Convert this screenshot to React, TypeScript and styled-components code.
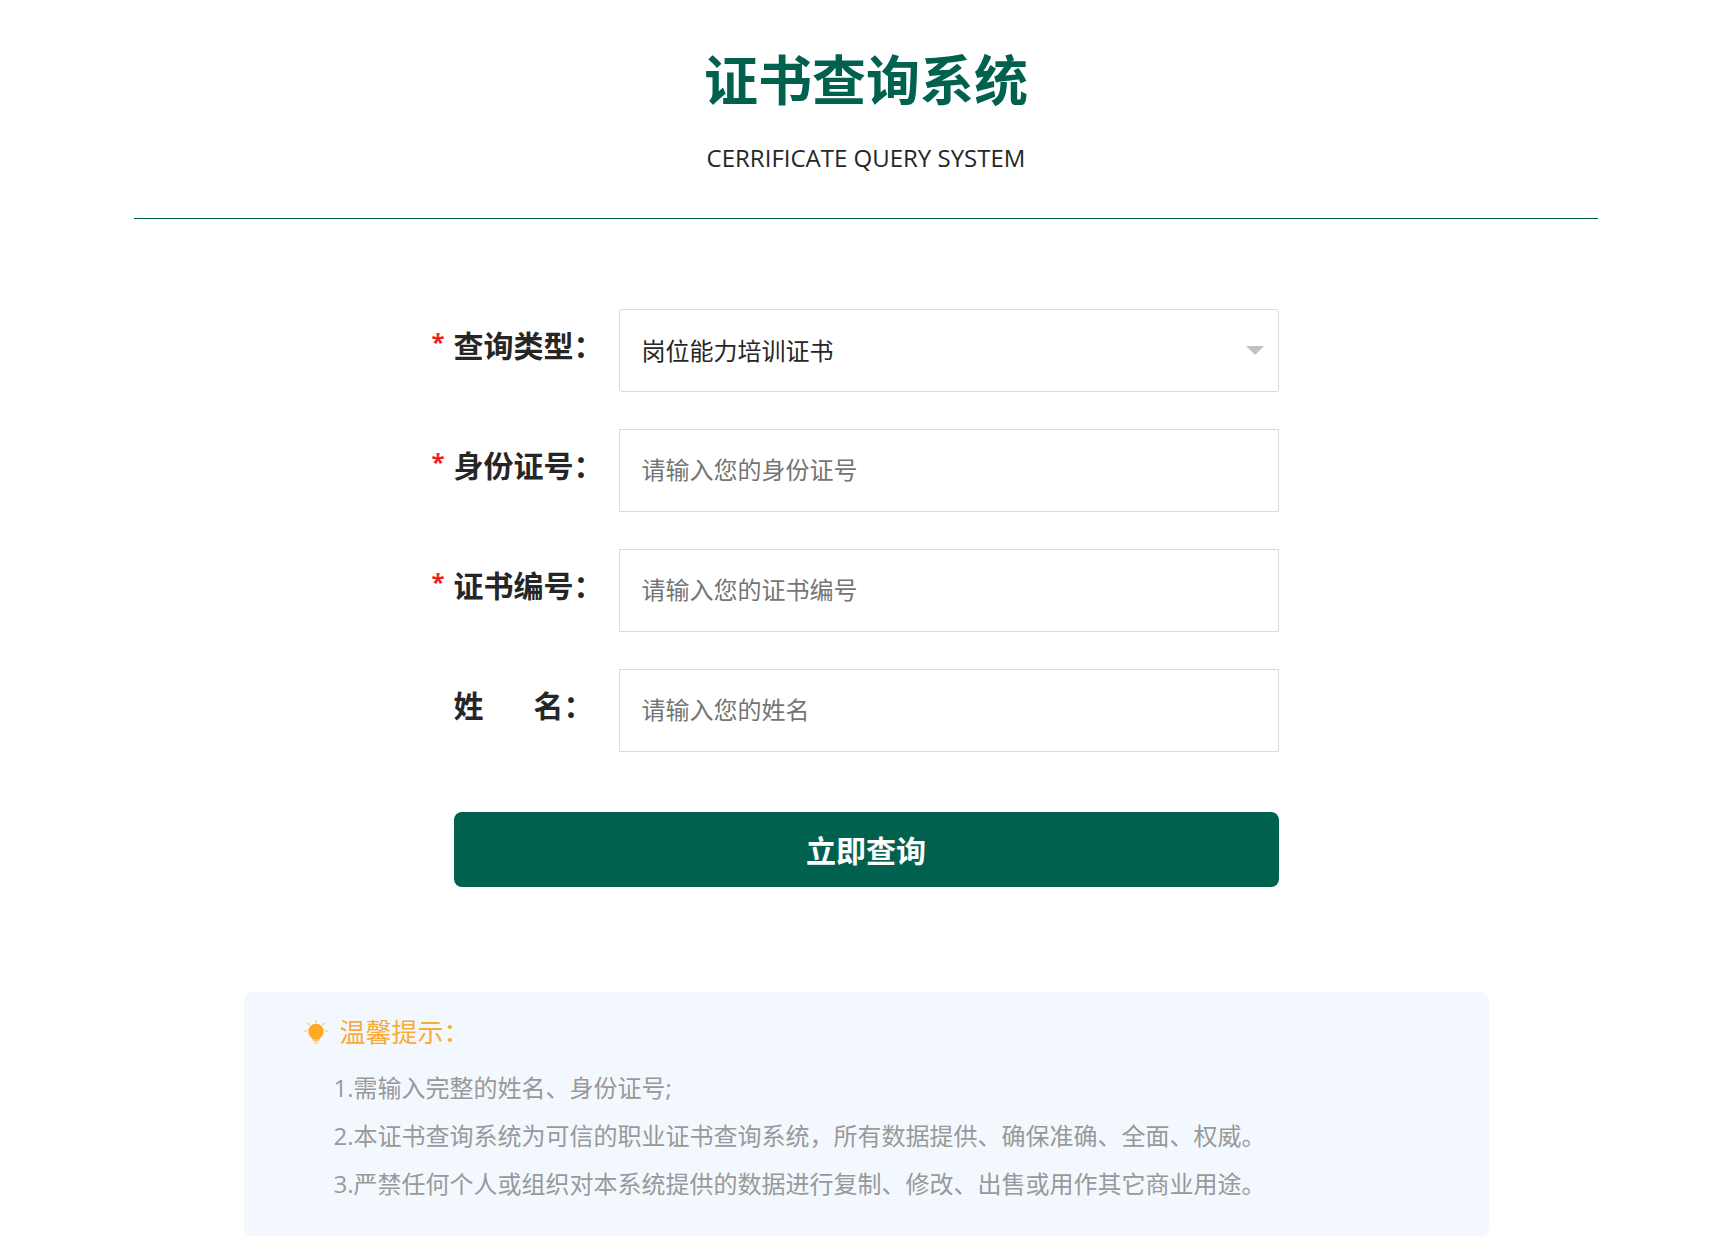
import React from "react";
import styled, { createGlobalStyle } from "styled-components";

const GlobalStyle = createGlobalStyle`
  *, *::before, *::after { box-sizing: border-box; }
  body {
    margin: 0;
    background: #fff;
    color: #262626;
    font-family: "Open Sans", "Noto Sans CJK SC", sans-serif;
    font-size: 24px;
  }
`;

const Page = styled.div`
  display: flex;
  flex-direction: column;
  align-items: center;
  padding: 40px 138px 22px 134px;
`;

const Header = styled.header`
  width: 100%;
  padding-bottom: 42px;
  border-bottom: 1px solid #00604e;
  text-align: center;
`;

const Title = styled.h1`
  margin: 0;
  color: #00614e;
  font-size: 54px;
  line-height: 80px;
  font-weight: 700;
`;

const Subtitle = styled.p`
  margin: 20px 0 0;
  font-size: 24px;
  line-height: 36px;
`;

const Form = styled.form`
  display: flex;
  flex-direction: column;
  gap: 37px;
  width: 100%;
  max-width: 869px;
  margin-top: 90px;
  padding: 0 22px;
`;

const Field = styled.div`
  display: grid;
  grid-template-columns: 22px 165px minmax(0, 1fr);
  align-items: start;
  margin-left: -22px;
`;

const Star = styled.span`
  color: #ee1c24;
  font-size: 24px;
  line-height: 66px;
  font-weight: 700;
`;

const Label = styled.label`
  grid-column: 2;
  font-size: 30px;
  line-height: 74px;
  font-weight: 700;
  white-space: pre;
`;

const Input = styled.input`
  width: 100%;
  height: 83px;
  padding: 0 22px 2px;
  border: 1px solid #dadada;
  background: #fff;
  color: inherit;
  font: inherit;
  outline: none;
  &::placeholder { color: #757575; opacity: 1; }
`;

const SelectBox = styled.div`
  position: relative;
`;

const Select = styled.select`
  display: block;
  width: 100%;
  height: 83px;
  padding: 0 48px 0 22px;
  border: 1px solid #dadada;
  border-radius: 3px;
  appearance: none;
  background: #fff;
  color: inherit;
  font: inherit;
  outline: none;
`;

const Arrow = styled.svg`
  position: absolute;
  top: 37px;
  right: 15px;
  pointer-events: none;
`;

const Submit = styled.button`
  height: 75px;
  margin-top: 23px;
  padding: 0 0 2px;
  border: 0;
  border-radius: 8px;
  background: #00614e;
  color: #fff;
  font: inherit;
  font-size: 30px;
  font-weight: 700;
  cursor: pointer;
`;

const Tips = styled.section`
  width: 100%;
  max-width: 1245px;
  margin-top: 105px;
  padding: 16px 60px 28px;
  border-radius: 8px;
  background: #f3f8ff;
`;

const TipsTitle = styled.h2`
  display: flex;
  align-items: center;
  gap: 12px;
  margin: 0;
  color: #f9ab36;
  font-size: 26px;
  line-height: 48px;
  font-weight: 400;
`;

const TipsList = styled.div`
  margin-top: 8px;
  padding-left: 30px;
  color: #999;
`;

const Tip = styled.p`
  margin: 0;
  line-height: 48px;
`;

const Bulb = () => (
  <svg width="24" height="24" viewBox="0 0 24 24" aria-hidden="true">
    <g stroke="#f8d29c" strokeWidth="2" strokeLinecap="round">
      <path d="M12 1v1M1 11h1M22 11h1M4 3.5l1 1M20 3.5l-1 1" />
    </g>
    <path d="M7 15h10l-2 6H9z" fill="#fcc06a" />
    <circle cx="12" cy="11.5" r="7.8" fill="#ffaa25" />
    <path d="M10 22.5h4" stroke="#fbd7a0" strokeWidth="2" />
  </svg>
);

const fields = [
  { id: "idno", label: "身份证号：", hint: "请输入您的身份证号", required: true },
  { id: "certno", label: "证书编号：", hint: "请输入您的证书编号", required: true },
  { id: "name", label: "姓\u2003\u2002\u2009名：", hint: "请输入您的姓名", required: false },
];

const tips = [
  "1.需输入完整的姓名、身份证号;",
  "2.本证书查询系统为可信的职业证书查询系统，所有数据提供、确保准确、全面、权威。",
  "3.严禁任何个人或组织对本系统提供的数据进行复制、修改、出售或用作其它商业用途。",
];

export default function App() {
  return (
    <>
      <GlobalStyle />
      <Page lang="zh-CN">
        <Header>
          <Title>证书查询系统</Title>
          <Subtitle>CERRIFICATE QUERY SYSTEM</Subtitle>
        </Header>
        <Form onSubmit={(e) => e.preventDefault()}>
          <Field>
            <Star>*</Star>
            <Label htmlFor="type">查询类型：</Label>
            <SelectBox>
              <Select id="type">
                <option>岗位能力培训证书</option>
              </Select>
              <Arrow width="18" height="9" viewBox="0 0 18 9" aria-hidden="true">
                <path d="M0 0h18L9 9z" fill="#c2c2c2" />
              </Arrow>
            </SelectBox>
          </Field>
          {fields.map((f) => (
            <Field key={f.id}>
              {f.required && <Star>*</Star>}
              <Label htmlFor={f.id}>{f.label}</Label>
              <Input id={f.id} type="text" placeholder={f.hint} />
            </Field>
          ))}
          <Submit type="submit">立即查询</Submit>
        </Form>
        <Tips>
          <TipsTitle>
            <Bulb />
            温馨提示：
          </TipsTitle>
          <TipsList>
            {tips.map((t) => (
              <Tip key={t}>{t}</Tip>
            ))}
          </TipsList>
        </Tips>
      </Page>
    </>
  );
}
